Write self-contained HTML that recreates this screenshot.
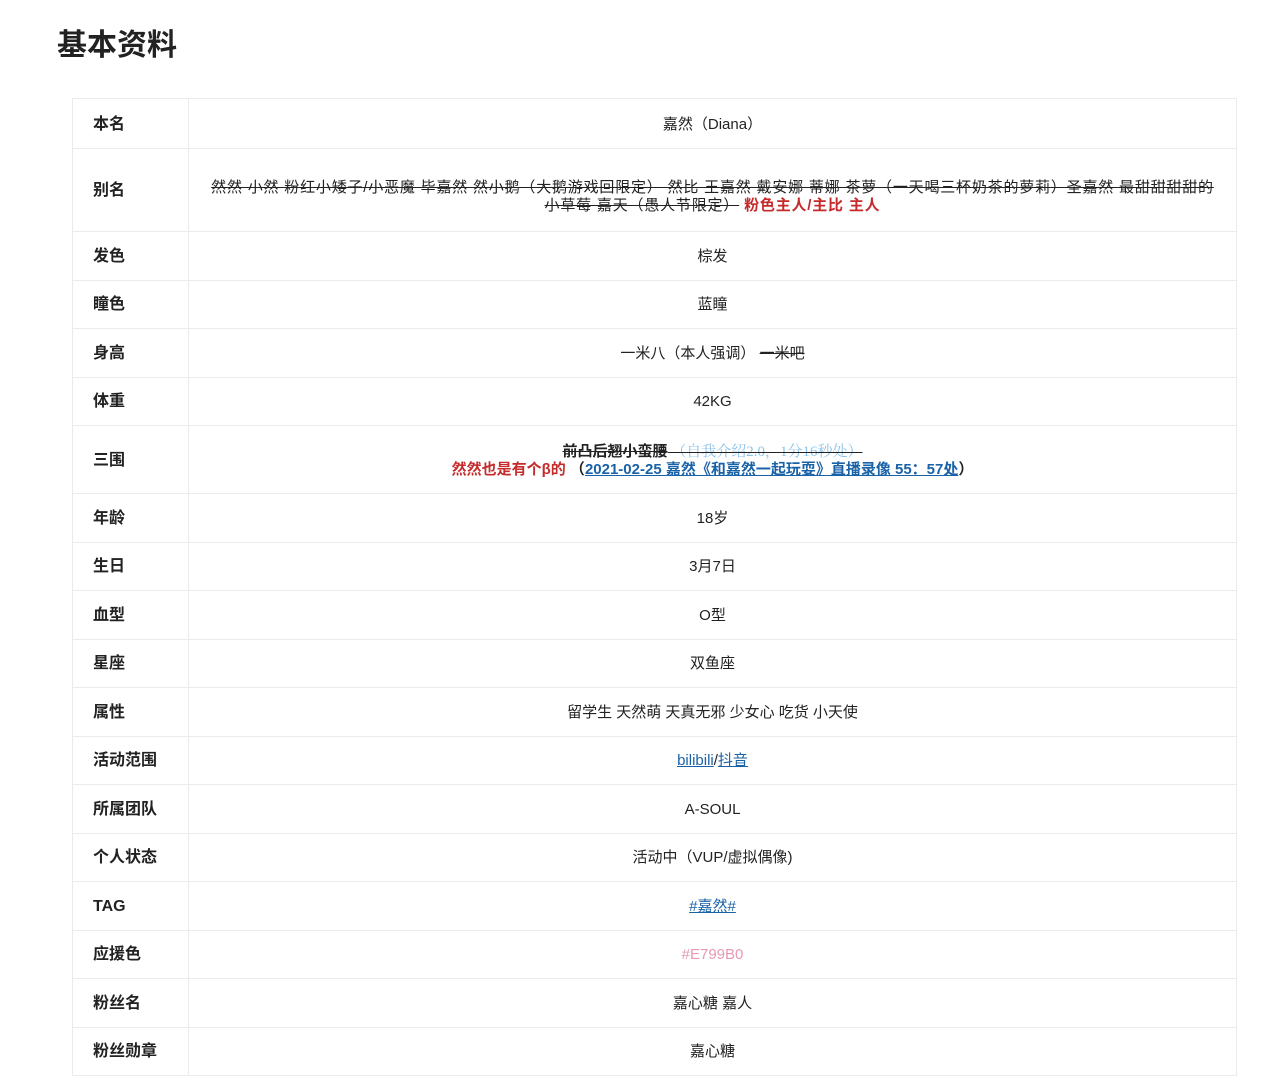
<!DOCTYPE html>
<html><head><meta charset="utf-8">
<style>
body{margin:0;background:#fff;font-family:"Liberation Sans","Noto Sans CJK SC",sans-serif;color:#222;width:1288px;height:1066px;overflow:hidden;}
h1{position:absolute;left:57px;top:29px;margin:0;font-size:30px;font-weight:bold;color:#222;line-height:34px;}
table{position:absolute;left:72px;top:98px;width:1165px;border-collapse:collapse;}
td{border:1px solid #ebebeb;font-size:15px;text-align:center;padding:2px 20px 0;line-height:18px;}
td.l{width:75px;text-align:left;font-weight:bold;font-size:16px;padding-left:20px;}
tr{height:48.5px;}
a{color:#1a62a8;text-decoration:underline;}
.red{color:#c52b2b;font-weight:bold;}
</style></head><body>
<h1>基本资料</h1>
<table>
<tr style="height:50px"><td class="l">本名</td><td>嘉然（Diana）</td></tr>
<tr style="height:83px"><td class="l">别名</td><td style="letter-spacing:0.8px;padding:13px 18px 0"><s>然然 小然 粉红小矮子/小恶魔 毕嘉然 然小鹅（大鹅游戏回限定） 然比 王嘉然 戴安娜 蒂娜 茶萝（一天喝三杯奶茶的萝莉）圣嘉然 最甜甜甜甜的小草莓 嘉天（愚人节限定）</s> <span class="red">粉色主人/主比 主人</span></td></tr>
<tr><td class="l">发色</td><td>棕发</td></tr>
<tr><td class="l">瞳色</td><td>蓝瞳</td></tr>
<tr><td class="l">身高</td><td>一米八（本人强调） <s>一米吧</s></td></tr>
<tr><td class="l">体重</td><td>42KG</td></tr>
<tr style="height:68px"><td class="l">三围</td><td><s><b>前凸后翘小蛮腰</b><span style="color:#8cc4e8;font-family:'Liberation Serif','Noto Serif CJK SC',serif"> （自我介绍2.0，1分16秒处） </span></s><br><span class="red">然然也是有个β的</span> <b>（<a href="#">2021-02-25 嘉然《和嘉然一起玩耍》直播录像 55：57处</a>）</b></td></tr>
<tr><td class="l">年龄</td><td>18岁</td></tr>
<tr><td class="l">生日</td><td>3月7日</td></tr>
<tr><td class="l">血型</td><td>O型</td></tr>
<tr><td class="l">星座</td><td>双鱼座</td></tr>
<tr><td class="l">属性</td><td>留学生 天然萌 天真无邪 少女心 吃货 小天使</td></tr>
<tr><td class="l">活动范围</td><td><a href="#">bilibili</a>/<a href="#">抖音</a></td></tr>
<tr><td class="l">所属团队</td><td>A-SOUL</td></tr>
<tr><td class="l">个人状态</td><td>活动中（VUP/虚拟偶像)</td></tr>
<tr><td class="l">TAG</td><td><a href="#">#嘉然#</a></td></tr>
<tr><td class="l">应援色</td><td style="color:#e799b0">#E799B0</td></tr>
<tr><td class="l">粉丝名</td><td>嘉心糖 嘉人</td></tr>
<tr><td class="l">粉丝勋章</td><td>嘉心糖</td></tr>
</table>
</body></html>
